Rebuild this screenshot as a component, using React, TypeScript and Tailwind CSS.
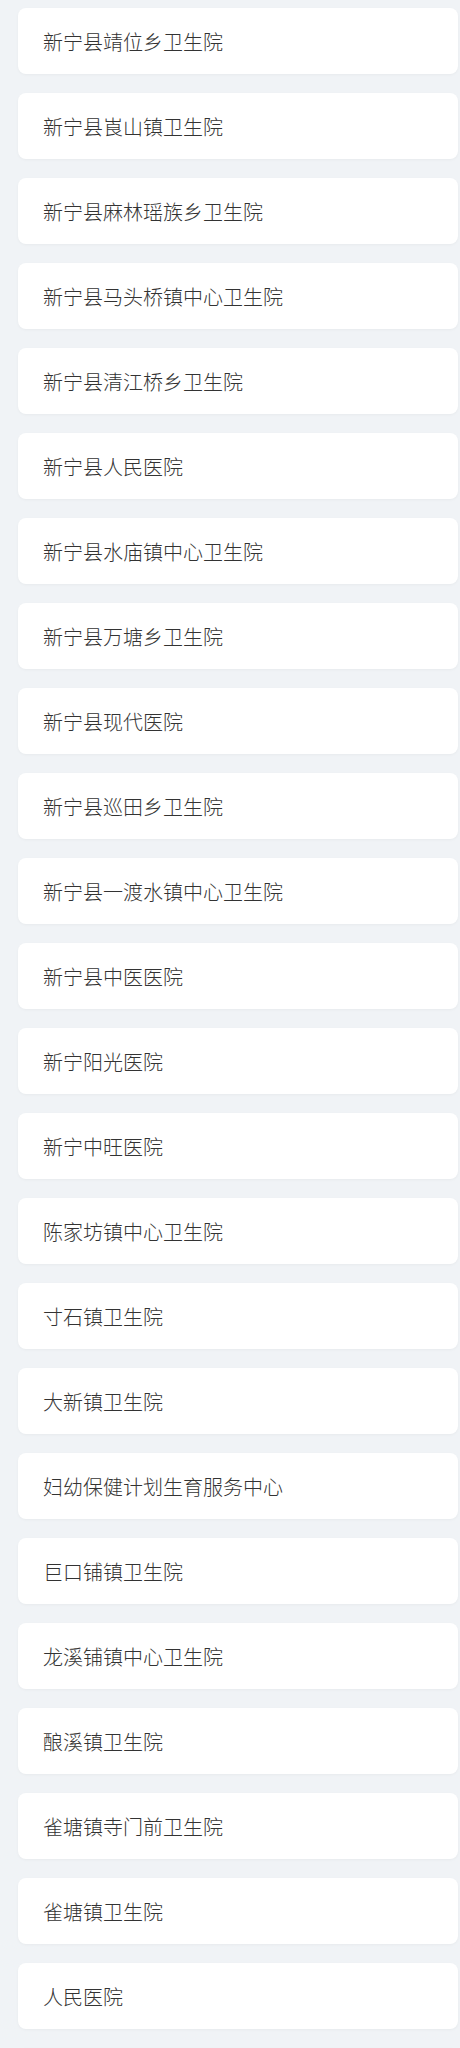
import React from "react";

const items = [
  "新宁县靖位乡卫生院",
  "新宁县崀山镇卫生院",
  "新宁县麻林瑶族乡卫生院",
  "新宁县马头桥镇中心卫生院",
  "新宁县清江桥乡卫生院",
  "新宁县人民医院",
  "新宁县水庙镇中心卫生院",
  "新宁县万塘乡卫生院",
  "新宁县现代医院",
  "新宁县巡田乡卫生院",
  "新宁县一渡水镇中心卫生院",
  "新宁县中医医院",
  "新宁阳光医院",
  "新宁中旺医院",
  "陈家坊镇中心卫生院",
  "寸石镇卫生院",
  "大新镇卫生院",
  "妇幼保健计划生育服务中心",
  "巨口铺镇卫生院",
  "龙溪铺镇中心卫生院",
  "酿溪镇卫生院",
  "雀塘镇寺门前卫生院",
  "雀塘镇卫生院",
  "人民医院",
];

export default function App() {
  return (
    <div className="min-h-[2048px] w-[460px] overflow-hidden bg-[#f0f3f6] pt-[8px] pl-[18px] pr-[2px]">
      <div className="flex flex-col gap-[19px]">
        {items.map((t) => (
          <div
            key={t}
            className="flex h-[66px] items-center rounded-lg bg-white pl-[25px] pt-[2px] text-[20px] font-light text-[#333333] shadow-[0_1px_3px_rgba(0,0,0,0.04)]"
            style={{ fontFamily: '"Noto Sans CJK SC", "Noto Sans", sans-serif' }}
          >
            {t}
          </div>
        ))}
        <div className="h-[66px] rounded-lg bg-white shadow-[0_1px_3px_rgba(0,0,0,0.04)]" />
      </div>
    </div>
  );
}
